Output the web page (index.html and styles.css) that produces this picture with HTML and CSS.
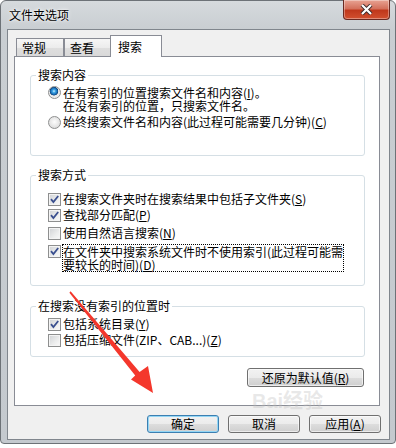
FILE: index.html
```html
<!DOCTYPE html>
<html lang="zh-CN">
<head>
    <meta charset="UTF-8">
    <title>文件夹选项</title>
    <link rel="stylesheet" href="styles.css">
</head>
<body>
    <div class="window">
        <div class="titlebar">
            <span class="title">文件夹选项</span>
            <div class="close">
                <svg width="13" height="11" viewBox="0 0 13 11">
                    <path d="M2 1 L11 10 M11 1 L2 10" stroke="#3b2a2a" stroke-width="4" fill="none"/>
                    <path d="M2 1 L11 10 M11 1 L2 10" stroke="#fff" stroke-width="2.2" fill="none"/>
                </svg>
            </div>
        </div>

        <div class="client">
            <div class="tabs">
                <div class="tab">常规</div>
                <div class="tab">查看</div>
                <div class="tab active">搜索</div>
            </div>

            <div class="panel">
                <fieldset class="group group-content">
                    <legend>搜索内容</legend>
                    <div class="opt first">
                        <span class="radio on"></span>
                        <span class="two-line">在有索引的位置搜索文件名和内容(<u>I</u>)。<br>在没有索引的位置，只搜索文件名。</span>
                    </div>
                    <div class="opt second">
                        <span class="radio"></span>
                        <span>始终搜索文件名和内容(此过程可能需要几分钟)(<u>C</u>)</span>
                    </div>
                </fieldset>

                <fieldset class="group group-way">
                    <legend>搜索方式</legend>
                    <div class="opt r1">
                        <span class="check on"><svg width="11" height="11" viewBox="0 0 11 11"><path d="M2 5.2 L4.4 8 L9.2 2" /></svg></span>
                        <span>在搜索文件夹时在搜索结果中包括子文件夹(<u>S</u>)</span>
                    </div>
                    <div class="opt r2">
                        <span class="check on"><svg width="11" height="11" viewBox="0 0 11 11"><path d="M2 5.2 L4.4 8 L9.2 2" /></svg></span>
                        <span>查找部分匹配(<u>P</u>)</span>
                    </div>
                    <div class="opt r3">
                        <span class="check"></span>
                        <span>使用自然语言搜索(<u>N</u>)</span>
                    </div>
                    <div class="opt r3">
                        <span class="check on"><svg width="11" height="11" viewBox="0 0 11 11"><path d="M2 5.2 L4.4 8 L9.2 2" /></svg></span>
                        <span class="two-line focused">在文件夹中搜索系统文件时不使用索引(此过程可能需<br>要较长的时间)(<u>D</u>)</span>
                    </div>
                </fieldset>

                <fieldset class="group group-noindex">
                    <legend>在搜索没有索引的位置时</legend>
                    <div class="opt r1">
                        <span class="check on"><svg width="11" height="11" viewBox="0 0 11 11"><path d="M2 5.2 L4.4 8 L9.2 2" /></svg></span>
                        <span>包括系统目录(<u>Y</u>)</span>
                    </div>
                    <div class="opt r2">
                        <span class="check"></span>
                        <span>包括压缩文件(ZIP、CAB...)(<u>Z</u>)</span>
                    </div>
                </fieldset>

                <div class="restore-row">
                    <button class="btn btn-restore">还原为默认值(<u>R</u>)</button>
                </div>
            </div>

            <div class="actions">
                <button class="btn btn-default">确定</button>
                <button class="btn">取消</button>
                <button class="btn">应用(<u>A</u>)</button>
            </div>
        </div>
    </div>

    <div class="watermark">Bai经验</div>

    <svg class="arrow" width="396" height="448" viewBox="0 0 396 448">
        <polygon points="70.6,291.2 69.4,292.8 135.2,375.6 131,379.5 153,393 148,366 139.6,371.9" fill="#f4372c"/>
    </svg>
</body>
</html>
```

FILE: styles.css
```css
body {
    margin: 0;
    background: #fff;
    font-family: "Noto Sans CJK SC", sans-serif;
    font-size: 12px;
    color: #000;
    position: relative;
    width: 396px;
    height: 448px;
    overflow: hidden;
}
.window {
    width: 396px;
    height: 444px;
    box-sizing: border-box;
    border: 1px solid #6d7277;
    border-radius: 6px 6px 4px 4px;
    background: linear-gradient(to bottom, #d6dadd 0, #c9ced2 28px, #c4c9ce 100%);
    padding: 0 5px 3px 6px;
    display: flex;
    flex-direction: column;
}
.titlebar {
    height: 28px;
    display: flex;
    justify-content: space-between;
    align-items: flex-start;
    flex-shrink: 0;
}
.title {
    margin: 7px 0 0 2px;
    line-height: 14px;
    text-shadow: 0 0 4px #fff, 0 0 2px #fff;
}
.close {
    width: 47px;
    height: 20px;
    margin-top: -1px;
    box-sizing: border-box;
    border: 1px solid #6a2a22;
    border-top: none;
    border-radius: 0 0 4px 4px;
    background: linear-gradient(to bottom, #e8a393 0, #d4715c 45%, #c0381c 55%, #d2502f 100%);
    box-shadow: inset 0 0 0 1px rgba(255,255,255,0.35);
    display: flex;
    align-items: center;
    justify-content: center;
}
.client {
    flex: 1;
    border: 1px solid #80868d;
    background: #f0f0f0;
    display: flex;
    flex-direction: column;
}
.tabs {
    height: 26px;
    padding-left: 8px;
    display: flex;
    align-items: flex-end;
    flex-shrink: 0;
}
.tab {
    width: 48px;
    height: 18px;
    box-sizing: border-box;
    border: 1px solid #898c95;
    border-bottom: none;
    background: linear-gradient(to bottom, #f6f6f6 0, #ececec 50%, #dedede 55%, #d9d9d9 100%);
    padding: 2px 0 0 5px;
    line-height: 14px;
}
.tab + .tab {
    width: 47px;
}
.tab.active {
    width: 52px;
    height: 22px;
    margin-left: -1px;
    margin-bottom: -1px;
    padding: 4px 0 0 7px;
    background: #fff;
    position: relative;
    z-index: 1;
}
.panel {
    margin: 0 9px 0 6px;
    height: 350px;
    box-sizing: border-box;
    border: 1px solid #898c95;
    background: #fff;
    padding: 11px 14px 0 15px;
}
.group {
    margin: 0;
    padding: 0;
    border: 1px solid #d5dfe5;
    border-radius: 3px;
    min-width: 0;
}
.group legend {
    margin-left: 5px;
    padding: 0 2px;
    line-height: 14px;
}
.opt {
    display: flex;
    align-items: flex-start;
    margin-left: 17px;
    line-height: 12px;
}
.opt > span:last-child {
    display: inline-block;
}
.opt .two-line {
    line-height: 13px;
}
.group-content {
    padding-bottom: 26px;
}
.group-content .first { margin-top: 4px; }
.group-content .second { margin-top: 4px; }
.group-way {
    margin-top: 12px;
    padding-bottom: 14px;
}
.group-way .r1 { margin-top: 11px; }
.group-way .r2 { margin-top: 3px; }
.group-way .r3 { margin-top: 5px; }
.group-noindex {
    margin-top: 13px;
    padding-bottom: 9px;
}
.group-noindex .r1 { margin-top: 5px; }
.group-noindex .r2 { margin-top: 3px; }
.radio {
    width: 13px;
    height: 13px;
    box-sizing: border-box;
    margin-right: 2px;
    border: 1px solid #8e8f8f;
    border-radius: 50%;
    background: radial-gradient(circle at 50% 45%, #fdfdfd 0, #e4e4e4 60%, #d0d0d0 100%);
    flex-shrink: 0;
}
.radio.on {
    background: radial-gradient(circle at 45% 38%, #d6f3ff 0, #3ea7e8 1.5px, #1766ad 3.4px, #0d3f74 4px, #e9e9e9 4.6px, #f6f6f6 100%);
}
.check {
    width: 13px;
    height: 13px;
    box-sizing: border-box;
    margin-right: 2px;
    border: 1px solid #8e8f8f;
    background: linear-gradient(135deg, #cfd1d4 0, #eceded 60%, #fafafa 100%);
    box-shadow: inset 0 0 0 1px #f4f4f4;
    flex-shrink: 0;
    display: flex;
}
.check svg path {
    fill: none;
    stroke: #3a4f8f;
    stroke-width: 1.8;
}
.focused {
    outline: 1px dotted #000;
}
u {
    text-decoration: underline;
}
.restore-row {
    margin-top: 11px;
    display: flex;
    justify-content: flex-end;
    padding-right: 1px;
}
.btn {
    height: 18px;
    width: 72px;
    box-sizing: border-box;
    border: 1px solid #707070;
    border-radius: 3px;
    background: linear-gradient(to bottom, #f2f2f2 0, #ebebeb 50%, #dddddd 51%, #cfcfcf 100%);
    box-shadow: inset 0 0 0 1px rgba(255,255,255,0.6);
    font-family: "Noto Sans CJK SC", sans-serif;
    font-size: 12px;
    line-height: 14px;
    padding: 0;
    color: #000;
}
.btn-restore {
    width: 117px;
    height: 19px;
}
.btn-default {
    border-color: #3c7fb1;
    box-shadow: inset 0 0 0 1px #93d6f5;
}
.actions {
    margin: 9px 8px 0 0;
    display: flex;
    justify-content: flex-end;
    gap: 9px;
}
.watermark {
    position: absolute;
    left: 252px;
    top: 390px;
    font-family: "Liberation Sans", "Noto Sans CJK SC", sans-serif;
    font-size: 20px;
    font-weight: bold;
    line-height: 22px;
    color: rgba(190, 190, 190, 0.35);
    pointer-events: none;
}
.arrow {
    position: absolute;
    left: 0;
    top: 0;
    pointer-events: none;
}
```
